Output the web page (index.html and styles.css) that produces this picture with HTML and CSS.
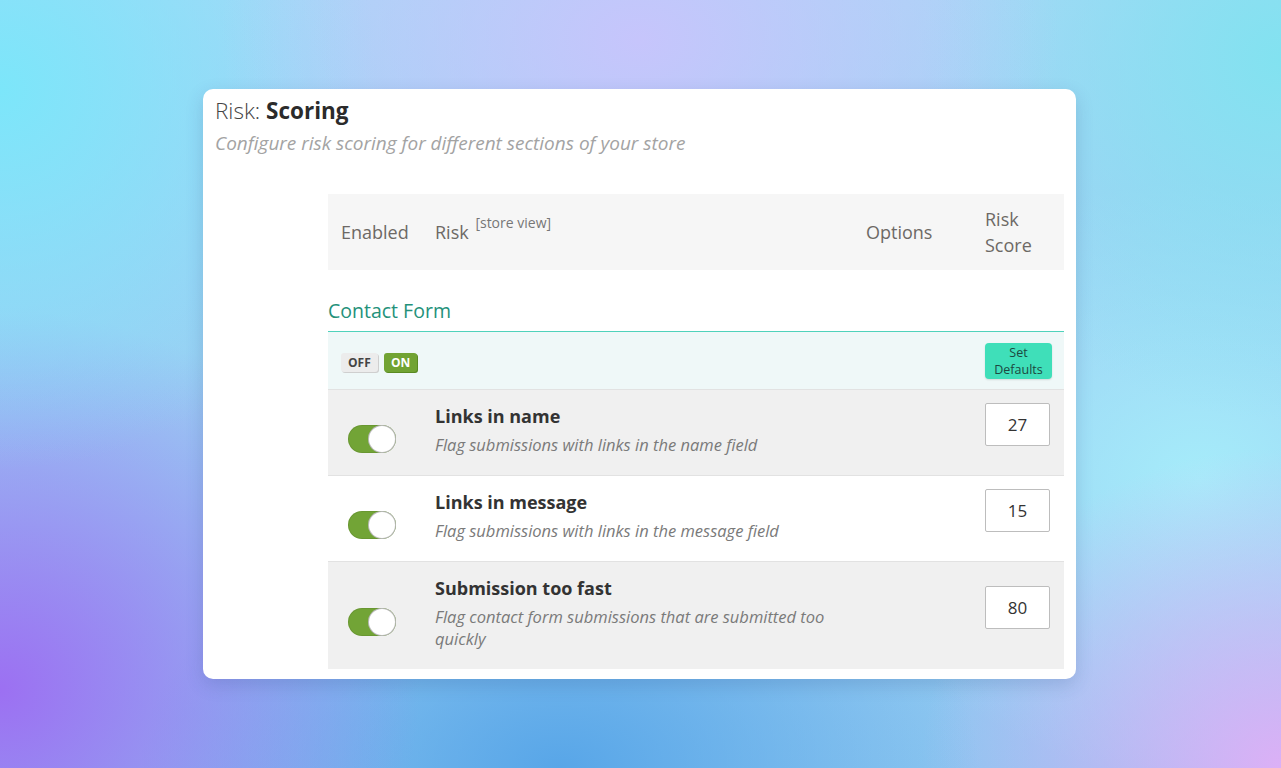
FILE: index.html
```html
<!DOCTYPE html>
<html lang="en">

<head>
  <meta charset="UTF-8" />
  <meta name="viewport" content="width=device-width, initial-scale=1.0" />
  <title>Risk Scoring</title>
  <link rel="stylesheet" href="styles.css">
</head>

<body>
  <div class="card">
    <h1 class="title"><span class="light">Risk:</span> Scoring</h1>
    <p class="subtitle">Configure risk scoring for different sections of your store</p>

    <table class="grid">
      <colgroup>
        <col class="col-enabled">
        <col class="col-risk">
        <col class="col-options">
        <col class="col-score">
      </colgroup>
      <thead>
        <tr class="head">
          <th>Enabled</th>
          <th>Risk <sup>[store view]</sup></th>
          <th>Options</th>
          <th>Risk<br>Score</th>
        </tr>
      </thead>
      <tbody>
        <tr class="section">
          <td colspan="4">Contact Form</td>
        </tr>
        <tr class="toolbar">
          <td colspan="3">
            <span class="pill pill-off">OFF</span>
            <span class="pill pill-on">ON</span>
          </td>
          <td><button class="defaults">Set<br>Defaults</button></td>
        </tr>
        <tr class="row odd">
          <td class="cell-toggle"><span class="toggle"></span></td>
          <td class="cell-text">
            <div class="name">Links in name</div>
            <div class="desc">Flag submissions with links in the name field</div>
          </td>
          <td></td>
          <td class="cell-score"><input class="score" type="text" value="27"></td>
        </tr>
        <tr class="row">
          <td class="cell-toggle"><span class="toggle"></span></td>
          <td class="cell-text">
            <div class="name">Links in message</div>
            <div class="desc">Flag submissions with links in the message field</div>
          </td>
          <td></td>
          <td class="cell-score"><input class="score" type="text" value="15"></td>
        </tr>
        <tr class="row odd">
          <td class="cell-toggle"><span class="toggle"></span></td>
          <td class="cell-text">
            <div class="name">Submission too fast</div>
            <div class="desc">Flag contact form submissions that are submitted too quickly</div>
          </td>
          <td></td>
          <td class="cell-score"><input class="score" type="text" value="80"></td>
        </tr>
      </tbody>
    </table>
  </div>
</body>

</html>
```

FILE: styles.css
```css
* {
  box-sizing: border-box;
}

html,
body {
  height: 100%;
}

body {
  margin: 0;
  display: flex;
  align-items: center;
  justify-content: center;
  font-family: "Open Sans", "Noto Sans", sans-serif;
  background-color: #8fd6f2;
  background-image:
    radial-gradient(ellipse 420px 300px at 640px 40px, rgba(200, 196, 252, 0.95), rgba(200, 196, 252, 0)),
    radial-gradient(ellipse 380px 380px at 0 90px, rgba(124, 230, 250, 1), rgba(124, 230, 250, 0)),
    radial-gradient(ellipse 360px 360px at 1281px 60px, rgba(130, 226, 240, 1), rgba(130, 226, 240, 0)),
    radial-gradient(ellipse 420px 380px at 0 690px, rgba(156, 112, 242, 1), rgba(156, 112, 242, 0)),
    radial-gradient(ellipse 420px 260px at 560px 768px, rgba(88, 166, 232, 1), rgba(88, 166, 232, 0)),
    radial-gradient(ellipse 360px 320px at 1281px 768px, rgba(220, 176, 246, 1), rgba(220, 176, 246, 0)),
    radial-gradient(ellipse 360px 300px at 1200px 480px, rgba(166, 236, 250, 1), rgba(166, 236, 250, 0)),
    linear-gradient(180deg, #a8d6f6 0%, #8cc6f0 100%);
}

.card {
  width: 873px;
  height: 590px;
  margin-right: 2px;
  padding: 7px 12px 12px;
  background-color: #fff;
  border-radius: 10px;
  box-shadow: 0 6px 18px rgba(40, 60, 120, 0.18);
}

.title {
  margin: 0;
  font-size: 22.5px;
  line-height: 30px;
  font-weight: 700;
  color: #2b2b2b;
}

.title .light {
  font-weight: 300;
  color: #444;
}

.subtitle {
  margin: 4px 0 0;
  font-size: 19px;
  line-height: 26px;
  font-style: italic;
  color: #a3a3a3;
}

.grid {
  width: 736px;
  margin: 38px 0 0 113px;
  border-collapse: collapse;
  table-layout: fixed;
}

.col-enabled {
  width: 94px;
}

.col-risk {
  width: 431px;
}

.col-options {
  width: 119px;
}

.col-score {
  width: 92px;
}

.head th {
  height: 76px;
  padding: 11px 13px;
  background-color: #f6f6f6;
  text-align: left;
  font-size: 18px;
  line-height: 26px;
  font-weight: 400;
  color: #6d6965;
}

.head sup {
  position: relative;
  top: -3px;
  margin-left: 2px;
  font-size: 14px;
  color: #777;
  vertical-align: top;
  line-height: 14px;
}

.section td {
  padding: 28px 0 7px;
  font-size: 19.5px;
  line-height: 26px;
  color: #24917a;
}

.toolbar td {
  height: 58px;
  padding: 0 13px;
  border-top: 1px solid #4fd2bb;
  background-color: #eff8f8;
  vertical-align: middle;
}

.pill {
  display: inline-block;
  height: 19px;
  padding: 0 7px;
  font-size: 12px;
  line-height: 19px;
  font-weight: 700;
  border-radius: 3px;
  vertical-align: middle;
}

.pill-off {
  background-color: #ececec;
  color: #444;
  box-shadow: 1px 1px 0 #cfcfcf;
}

.pill-on {
  margin-left: 2px;
  background-color: #71a333;
  color: #fff;
  box-shadow: 1px 1px 0 #5a8a22;
}

.defaults {
  display: block;
  width: 67px;
  height: 36px;
  padding: 0;
  border: none;
  border-radius: 4px;
  background-color: #3fdfb9;
  font-family: inherit;
  font-size: 12.5px;
  line-height: 17px;
  color: #1d4840;
  box-shadow: 0 1px 2px rgba(0, 0, 0, 0.12);
}

.row td {
  border-top: 1px solid #e2e2e2;
  vertical-align: middle;
}

.odd td {
  background-color: #f0f0f0;
}

.cell-toggle {
  padding: 12px 0 0 20px;
}

.toggle {
  position: relative;
  display: block;
  width: 48px;
  height: 28px;
  border-radius: 14px;
  background-color: #72a436;
  box-shadow: inset 0 0 0 1px rgba(0, 0, 0, 0.08);
}

.toggle::after {
  content: "";
  position: absolute;
  top: 1px;
  right: 1px;
  width: 26px;
  height: 26px;
  border-radius: 50%;
  background-color: #fff;
  box-shadow: 0 0 0 1px #b9b9b9;
}

.cell-text {
  padding: 14px 13px 19px;
}

.name {
  font-size: 18px;
  line-height: 24px;
  font-weight: 700;
  color: #333;
}

.desc {
  margin-top: 6px;
  font-size: 16.5px;
  line-height: 22px;
  font-style: italic;
  color: #7a7a7a;
}

.cell-score {
  padding: 0 13px 16px;
}

.score {
  display: block;
  width: 65px;
  height: 43px;
  border: 1px solid #bdbdbd;
  border-radius: 2px;
  background-color: #fff;
  font-family: inherit;
  font-size: 17px;
  text-align: center;
  color: #333;
}
```
